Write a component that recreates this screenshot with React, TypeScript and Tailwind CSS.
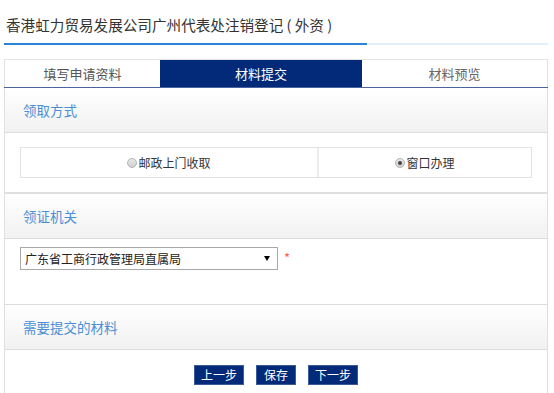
import React from 'react';

const font = { fontFamily: '"Noto Sans CJK SC", "Noto Sans", sans-serif' };

const SectionHeader: React.FC<{ title: string }> = ({ title }) => (
  <div className="h-[45px] flex items-center pl-[18px] bg-gradient-to-b from-white to-[#f1f1f1] border-b border-[#dddddd]">
    <span className="text-[13.5px] text-[#4a8fd6]">{title}</span>
  </div>
);

const Radio: React.FC<{ checked?: boolean; label: string }> = ({ checked, label }) => (
  <div className="flex items-center">
    <span className="w-[10px] h-[10px] rounded-full border border-[#b5b5b5] bg-gradient-to-b from-[#e8e8e8] to-[#cfcfcf] flex items-center justify-center">
      {checked && <span className="w-[4px] h-[4px] rounded-full bg-[#444]" />}
    </span>
    <span className="text-[12px] text-[#333] ml-[1px] leading-none">{label}</span>
  </div>
);

const App: React.FC = () => {
  return (
    <div className="w-[554px] h-[393px] overflow-hidden bg-white" style={font}>
      {/* 标题 */}
      <div className="h-[43px] pl-[6px] pt-[15px]">
        <h1 className="text-[14.6px] leading-[20px] text-[#333]">香港虹力贸易发展公司广州代表处注销登记 ( 外资 )</h1>
      </div>
      <div className="ml-[4px] w-[544px] flex">
        <div className="w-[363px] h-[2px] bg-[#2b83d6]" />
        <div className="flex-1 h-[2px] bg-[#e2f0fb]" />
      </div>

      {/* 步骤 */}
      <div className="ml-[4px] mt-[14px] w-[544px] h-[29px] flex border-t border-[#e3e3e3] border-b border-b-[#4a64a0]">
        <div className="w-[156px] flex items-center justify-center border-l border-[#e3e3e3] text-[13px] text-[#555]">填写申请资料</div>
        <div className="w-[202px] flex items-center justify-center bg-[#022a78] text-[13px] text-white">材料提交</div>
        <div className="flex-1 flex items-center justify-center border-r border-[#e3e3e3] text-[13px] text-[#666]">材料预览</div>
      </div>

      <div className="ml-[4px] w-[544px] border-x border-[#e0e0e0]">
        <SectionHeader title="领取方式" />
        <div className="h-[61px] pt-[14px] px-[15px] border-b-2 border-[#e0e0e0]">
          <div className="flex h-[31px] border border-[#e3e3e3]">
            <div className="w-[298px] flex items-center justify-center border-r-2 border-[#ececec]">
              <Radio label="邮政上门收取" />
            </div>
            <div className="flex-1 flex items-center justify-center">
              <Radio checked label="窗口办理" />
            </div>
          </div>
        </div>

        <SectionHeader title="领证机关" />
        <div className="h-[66px] pt-[8px] px-[15px] border-b border-[#dddddd] flex items-start">
          <div className="w-[258px] h-[23px] border border-[#a9a9a9] flex items-center justify-between pl-[4px] pr-[7px]">
            <span className="text-[12px] text-[#222]">广东省工商行政管理局直属局</span>
            <span className="w-0 h-0 border-l-[3px] border-r-[3px] border-t-[5px] border-l-transparent border-r-transparent border-t-black" />
          </div>
          <span className="ml-[6px] mt-[4px] text-[13px] text-[#ff5a5a] leading-none">*</span>
        </div>

        <SectionHeader title="需要提交的材料" />
        <div className="h-[60px] pt-[15px] flex justify-center gap-[12px]">
          <button className="w-[50px] h-[20px] bg-[#022a78] border border-[#3a5a9a] text-white text-[12px] leading-none">上一步</button>
          <button className="w-[40px] h-[20px] bg-[#022a78] border border-[#3a5a9a] text-white text-[12px] leading-none">保存</button>
          <button className="w-[50px] h-[20px] bg-[#022a78] border border-[#3a5a9a] text-white text-[12px] leading-none">下一步</button>
        </div>
      </div>
    </div>
  );
};

export default App;
